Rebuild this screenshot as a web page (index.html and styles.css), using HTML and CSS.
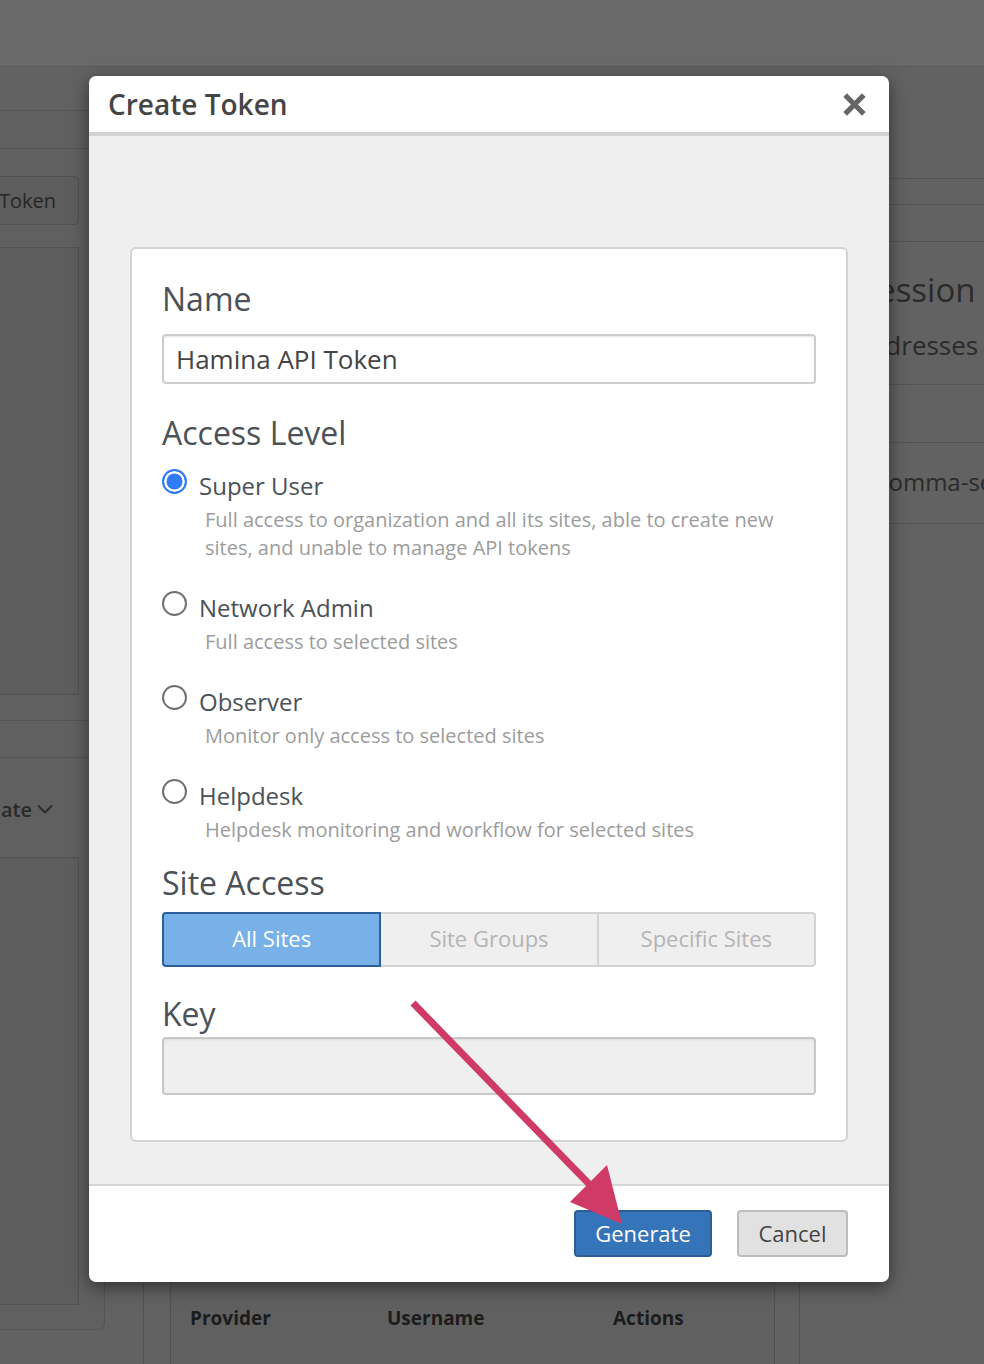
FILE: index.html
```html
<!DOCTYPE html>
<html lang="en">
<head>
<meta charset="utf-8">
<title>Create Token</title>
<link rel="stylesheet" href="styles.css">
</head>
<body>
  <div class="app">
    <header class="topbar"></header>
    <div class="workspace">
      <aside class="left-col">
        <div class="lc-card">
          <div class="lc-tabs"></div>
          <div class="lc-section">
            <div class="lc-actions"><button class="btn-ghost">Create Token</button></div>
            <div class="lc-box"></div>
          </div>
          <div class="lc-band"></div>
          <div class="lc-section lc-section-2">
            <div class="lc-sort">
              <span>Sort by Date</span>
              <svg class="chev" width="16" height="10" viewBox="0 0 16 10"><path d="M1 1.5 L8 8.5 L15 1.5" fill="none" stroke="#6a6a6a" stroke-width="2"/></svg>
            </div>
            <div class="lc-box lc-box-2"></div>
          </div>
        </div>
      </aside>
      <main class="center-col">
        <div class="cc-card">
          <div class="cc-content"></div>
          <div class="table-card">
            <div class="table-head">
              <span>Provider</span>
              <span>Username</span>
              <span>Actions</span>
            </div>
          </div>
        </div>
      </main>
      <aside class="right-col">
        <div class="rc-line-a"></div>
        <div class="rc-line-b"></div>
        <div class="rc-section">
          <h3 class="rc-title">Session</h3>
          <p class="rc-sub">Addresses</p>
        </div>
        <div class="rc-row"></div>
        <div class="rc-row rc-row-tall"><span>comma-separated list</span></div>
      </aside>
    </div>
  </div>

  <div class="backdrop"></div>

  <div class="modal">
    <div class="modal-header">
      <h2 class="modal-title">Create Token</h2>
      <svg class="close" width="23" height="23" viewBox="0 0 23 23"><path d="M4 4 L19 19 M19 4 L4 19" stroke="#666" stroke-width="5.2" stroke-linecap="square" fill="none"/></svg>
    </div>
    <div class="modal-body">
      <div class="card">
        <div class="label">Name</div>
        <div class="text-input">Hamina API Token</div>

        <div class="label label-access">Access Level</div>
        <div class="options">
          <div class="option">
            <div class="opt-row"><span class="radio radio-on"></span><span class="opt-label">Super User</span></div>
            <div class="opt-desc">Full access to organization and all its sites, able to create new sites, and unable to manage API tokens</div>
          </div>
          <div class="option">
            <div class="opt-row"><span class="radio"></span><span class="opt-label">Network Admin</span></div>
            <div class="opt-desc">Full access to selected sites</div>
          </div>
          <div class="option">
            <div class="opt-row"><span class="radio"></span><span class="opt-label">Observer</span></div>
            <div class="opt-desc">Monitor only access to selected sites</div>
          </div>
          <div class="option">
            <div class="opt-row"><span class="radio"></span><span class="opt-label">Helpdesk</span></div>
            <div class="opt-desc">Helpdesk monitoring and workflow for selected sites</div>
          </div>
        </div>

        <div class="label label-site">Site Access</div>
        <div class="segmented">
          <div class="seg seg-active">All Sites</div>
          <div class="seg">Site Groups</div>
          <div class="seg">Specific Sites</div>
        </div>

        <div class="label label-key">Key</div>
        <div class="key-input"></div>
      </div>
    </div>
    <div class="modal-footer">
      <button class="btn btn-primary">Generate</button>
      <button class="btn btn-default">Cancel</button>
    </div>
  </div>

  <svg class="annotation" width="984" height="1364" viewBox="0 0 984 1364">
    <line x1="413" y1="1003" x2="592" y2="1187" stroke="#cf3a67" stroke-width="7"/>
    <polygon points="570,1202 607,1165 622,1224" fill="#cf3a67"/>
  </svg>
</body>
</html>
```

FILE: styles.css
```css
* { box-sizing: border-box; }

html, body {
  margin: 0;
  padding: 0;
}

body {
  width: 984px;
  height: 1364px;
  overflow: hidden;
  position: relative;
  background: #eeeeee;
  font-family: "Open Sans", "Liberation Sans", sans-serif;
}

/* ---------- background page ---------- */
.topbar {
  height: 67px;
  background: #ffffff;
  border-bottom: 1px solid #dadada;
}

.workspace {
  display: grid;
  grid-template-columns: 300px 657px 467px;
  column-gap: 38px;
  margin-left: -195px;
  width: 1500px;
}

.left-col { padding-top: 43px; }

.lc-card {
  background: #e8e8e8;
  border: 1px solid #cbcbcb;
  border-radius: 6px;
}

.lc-tabs {
  height: 38px;
  border-bottom: 1px solid #cbcbcb;
}

.lc-section { padding: 27px 25px 25px; }
.lc-section-2 { padding: 36px 25px 24px; }

.lc-actions {
  display: flex;
  justify-content: flex-end;
}

.btn-ghost {
  height: 49px;
  padding: 0 22px;
  border: 1px solid #c2c2c2;
  border-radius: 5px;
  background: #e3e3e3;
  color: #5e5e5e;
  font-family: "Open Sans", "Liberation Sans", sans-serif;
  font-size: 20px;
  white-space: nowrap;
}

.lc-box {
  height: 448px;
  margin-top: 22px;
  border: 1px solid #c6c6c6;
  background: #e1e1e1;
}

.lc-box-2 { margin-top: 33px; }

.lc-band {
  height: 38px;
  border-top: 1px solid #cbcbcb;
  border-bottom: 1px solid #cbcbcb;
}

.lc-sort {
  display: flex;
  justify-content: flex-end;
  align-items: center;
  gap: 5px;
  height: 30px;
  padding-right: 26px;
  font-size: 20px;
  font-weight: 600;
  color: #646464;
  white-space: nowrap;
}

.center-col { padding-top: 43px; }

.cc-card {
  border-left: 1px solid #c8c8c8;
  border-right: 1px solid #c8c8c8;
  padding: 0 24px 0 26px;
  min-height: 1300px;
}

.cc-content { height: 1140px; }

.table-card {
  height: 220px;
  border: 1px solid #c8c8c8;
  border-radius: 4px;
  background: #eaeaea;
}

.table-head {
  display: grid;
  grid-template-columns: 197px 226px 1fr;
  padding: 50px 0 0 19px;
  line-height: 34px;
  font-size: 19px;
  font-weight: 700;
  color: #464646;
}

.right-col { padding-top: 111px; }

.rc-line-a {
  height: 27px;
  border-top: 1px solid #cbcbcb;
  border-bottom: 1px solid #cbcbcb;
}

.rc-line-b {
  height: 37px;
  border-bottom: 1px solid #cbcbcb;
}

.rc-section {
  height: 143px;
  padding: 26px 0 0 15px;
  border-bottom: 1px solid #cbcbcb;
}

.rc-title {
  margin: 0;
  padding-left: 6px;
  font-size: 33px;
  line-height: 44px;
  font-weight: 400;
  color: #686868;
}

.rc-sub {
  margin: 16px 0 0;
  font-size: 26px;
  line-height: 34px;
  color: #686868;
}

.rc-row {
  height: 58px;
  border-bottom: 1px solid #cbcbcb;
}

.rc-row-tall {
  height: 81px;
  display: flex;
  align-items: center;
  padding-left: 39px;
  padding-bottom: 4px;
  font-size: 24px;
  color: #686868;
  white-space: nowrap;
}

/* ---------- overlay ---------- */
.backdrop {
  position: absolute;
  inset: 0;
  background: rgba(0, 0, 0, 0.59);
  z-index: 1;
}

.annotation {
  position: absolute;
  left: 0;
  top: 0;
  z-index: 3;
  pointer-events: none;
}

/* ---------- modal ---------- */
.modal {
  position: absolute;
  left: 89px;
  top: 76px;
  width: 800px;
  z-index: 2;
  background: #ffffff;
  border-radius: 7px;
  overflow: hidden;
  box-shadow: 0 5px 18px rgba(0, 0, 0, 0.5);
}

.modal-header {
  height: 60px;
  display: flex;
  align-items: center;
  justify-content: space-between;
  padding: 0 23px 0 19px;
  border-bottom: 4px solid #d3d3d3;
}

.modal-title {
  margin: 0;
  font-size: 28px;
  line-height: 28px;
  font-weight: 600;
  color: #454545;
}

.close { display: block; }

.modal-body {
  background: #efefef;
  padding: 111px 41px 42px;
}

.card {
  background: #ffffff;
  border: 2px solid #d3d3d3;
  border-radius: 6px;
  padding: 31px 30px 45px;
}

.label {
  font-size: 32px;
  line-height: 38px;
  color: #4b5157;
}

.text-input {
  margin-top: 16px;
  height: 50px;
  border: 2px solid #cdcdcd;
  border-radius: 4px;
  box-shadow: inset 0 1px 2px rgba(0, 0, 0, 0.1);
  display: flex;
  align-items: center;
  padding-left: 12px;
  font-size: 26px;
  color: #444444;
}

.label-access { margin-top: 30px; }

.options {
  display: flex;
  flex-direction: column;
  gap: 30px;
  margin-top: 18px;
}

.opt-row {
  display: flex;
  align-items: flex-start;
  gap: 12px;
}

.radio {
  flex: none;
  width: 25px;
  height: 25px;
  margin-top: -1px;
  border-radius: 50%;
  border: 2px solid #707070;
  background: #ffffff;
}

.radio-on {
  border-color: #2f7cf6;
  background: #2f7cf6;
  box-shadow: inset 0 0 0 2.5px #ffffff;
}

.opt-label {
  font-size: 24px;
  line-height: 32px;
  color: #4b5157;
}

.opt-desc {
  margin-top: 4px;
  padding-left: 43px;
  max-width: 645px;
  font-size: 20px;
  line-height: 28px;
  color: #9c9c9c;
}

.label-site { margin-top: 20px; }

.segmented {
  display: flex;
  margin-top: 10px;
  height: 55px;
}

.seg {
  flex: 1;
  display: flex;
  align-items: center;
  justify-content: center;
  padding-bottom: 3px;
  border: 2px solid #d3d3d3;
  background: #efefef;
  color: #b4b4b4;
  font-size: 22px;
  margin-left: -2px;
}

.seg:first-child { margin-left: 0; border-radius: 4px 0 0 4px; }
.seg:last-child { border-radius: 0 4px 4px 0; }

.seg-active {
  position: relative;
  z-index: 1;
  background: #77b1e8;
  border-color: #2c5f9b;
  color: #ffffff;
}

.label-key { margin-top: 28px; }

.key-input {
  margin-top: 4px;
  height: 58px;
  background: #efefef;
  border: 2px solid #c8c8c8;
  border-radius: 4px;
  box-shadow: inset 0 1px 2px rgba(0, 0, 0, 0.08);
}

.modal-footer {
  border-top: 2px solid #d6d6d6;
  height: 98px;
  display: flex;
  justify-content: flex-end;
  align-items: flex-start;
  gap: 25px;
  padding: 24px 41px 0;
}

.btn {
  height: 47px;
  border-radius: 4px;
  font-family: "Open Sans", "Liberation Sans", sans-serif;
  font-size: 22px;
  padding: 0 0 2px;
}

.btn-primary {
  width: 138px;
  background: #3674b9;
  border: 2px solid #2b5d96;
  color: #ffffff;
}

.btn-default {
  width: 111px;
  background: #e1e1e1;
  border: 2px solid #bdbdbd;
  color: #444444;
}
```
